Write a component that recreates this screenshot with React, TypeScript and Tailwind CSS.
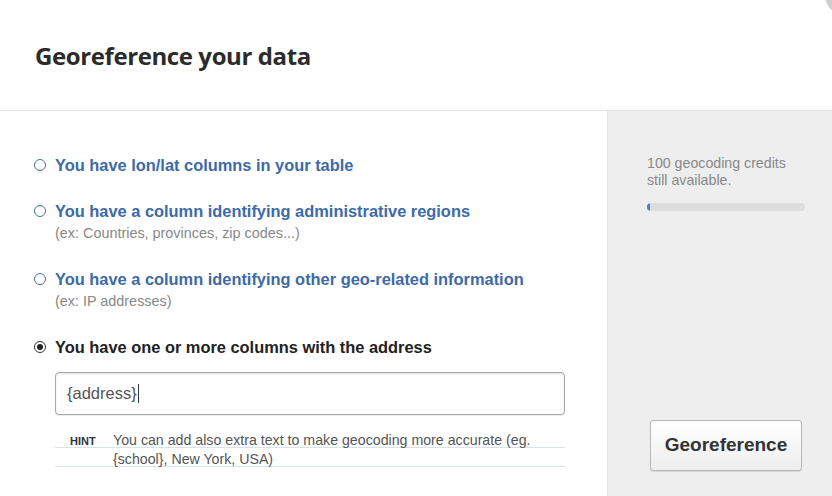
import React from "react";

const options = [
  { label: "You have lon/lat columns in your table", sub: "" },
  {
    label: "You have a column identifying administrative regions",
    sub: "(ex: Countries, provinces, zip codes...)",
  },
  {
    label: "You have a column identifying other geo-related information",
    sub: "(ex: IP addresses)",
  },
];

const Radio = ({ checked }: { checked?: boolean }) => (
  <span
    className={`flex h-[12px] w-[12px] shrink-0 items-center justify-center rounded-full border ${
      checked ? "border-[#333]" : "border-[#4a6fa5]"
    } bg-white`}
  >
    {checked && <span className="h-[6px] w-[6px] rounded-full bg-[#222]" />}
  </span>
);

export default function App() {
  return (
    <div className="relative flex h-[496px] w-[832px] flex-col overflow-hidden bg-white font-['Liberation_Sans',Arial,sans-serif]">
      <span className="absolute right-[-33px] top-[-25px] h-[40px] w-[40px] rounded-full bg-[#cfcfcf]" />
      <div className="h-[111px] shrink-0 border-b border-[#e2e2e2] pl-[35px] pt-[40px]">
        <h1 className="font-['Open_Sans',sans-serif] text-[24px] font-bold leading-[32px] tracking-[-0.4px] text-[#2b2b2b]">
          Georeference your data
        </h1>
      </div>
      <div className="flex flex-1">
        <div className="flex-1 pl-[34px] pt-[44px]">
          {options.map((o, i) => (
            <div key={i} className={`flex flex-col ${o.sub ? "mb-[28px]" : "mb-[26px]"}`}>
              <div className="flex items-center gap-[9px]">
                <Radio />
                <span className="text-[16.4px] font-bold leading-[20px] text-[#3d6aa8]">{o.label}</span>
              </div>
              {o.sub && (
                <span className="ml-[21px] mt-[4px] text-[14.4px] leading-[16px] text-[#888]">{o.sub}</span>
              )}
            </div>
          ))}
          <div className="flex items-center gap-[9px]">
            <Radio checked />
            <span className="text-[16.4px] font-bold leading-[20px] text-[#222]">
              You have one or more columns with the address
            </span>
          </div>
          <div className="ml-[21px] mt-[15px] flex h-[43px] w-[510px] items-center rounded-[4px] border border-[#a8a8a8] bg-white px-[11px] shadow-[inset_0_1px_2px_rgba(0,0,0,0.12),0_1px_1px_rgba(0,0,0,0.08)]">
            <span className="text-[16.5px] text-[#555]">{"{address}"}</span>
            <span className="ml-[1px] h-[19px] w-[1px] bg-[#333]" />
          </div>
          <div className="ml-[21px] mt-[14px] w-[510px] text-[14.2px] leading-[16px] text-[#555]">
            <div className="flex h-[19px] border-b border-[#d6e2ee] pl-[15px] pt-[3px]">
              <span className="w-[43px] shrink-0 pt-[2px] text-[11px] font-bold leading-[14px] text-[#333]">HINT</span>
              <span className="whitespace-nowrap">You can add also extra text to make geocoding more accurate (eg.</span>
            </div>
            <div className="h-[19px] border-b border-[#d6e2ee] pl-[58px] pt-[3px]">
              {"{school}"}, New York, USA)
            </div>
          </div>
        </div>
        <div className="flex w-[225px] shrink-0 flex-col border-l border-[#e6e6e6] bg-[#eeeeee] pl-[39px] pt-[44px]">
          <p className="text-[14.2px] leading-[17px] text-[#888]">
            100 geocoding credits
            <br />
            still available.
          </p>
          <div className="mt-[14px] h-[8px] w-[158px] overflow-hidden rounded-full bg-[#dddddd]">
            <div className="h-full w-[3px] rounded-full bg-[#4a7fd0]" />
          </div>
          <button className="ml-[3px] mt-[209px] h-[51px] w-[152px] rounded-[3px] border border-[#b8b8b8] bg-gradient-to-b from-white to-[#eeeeee] text-[19px] font-bold text-[#333] shadow-[0_1px_1px_rgba(0,0,0,0.1)]">
            Georeference
          </button>
        </div>
      </div>
    </div>
  );
}
